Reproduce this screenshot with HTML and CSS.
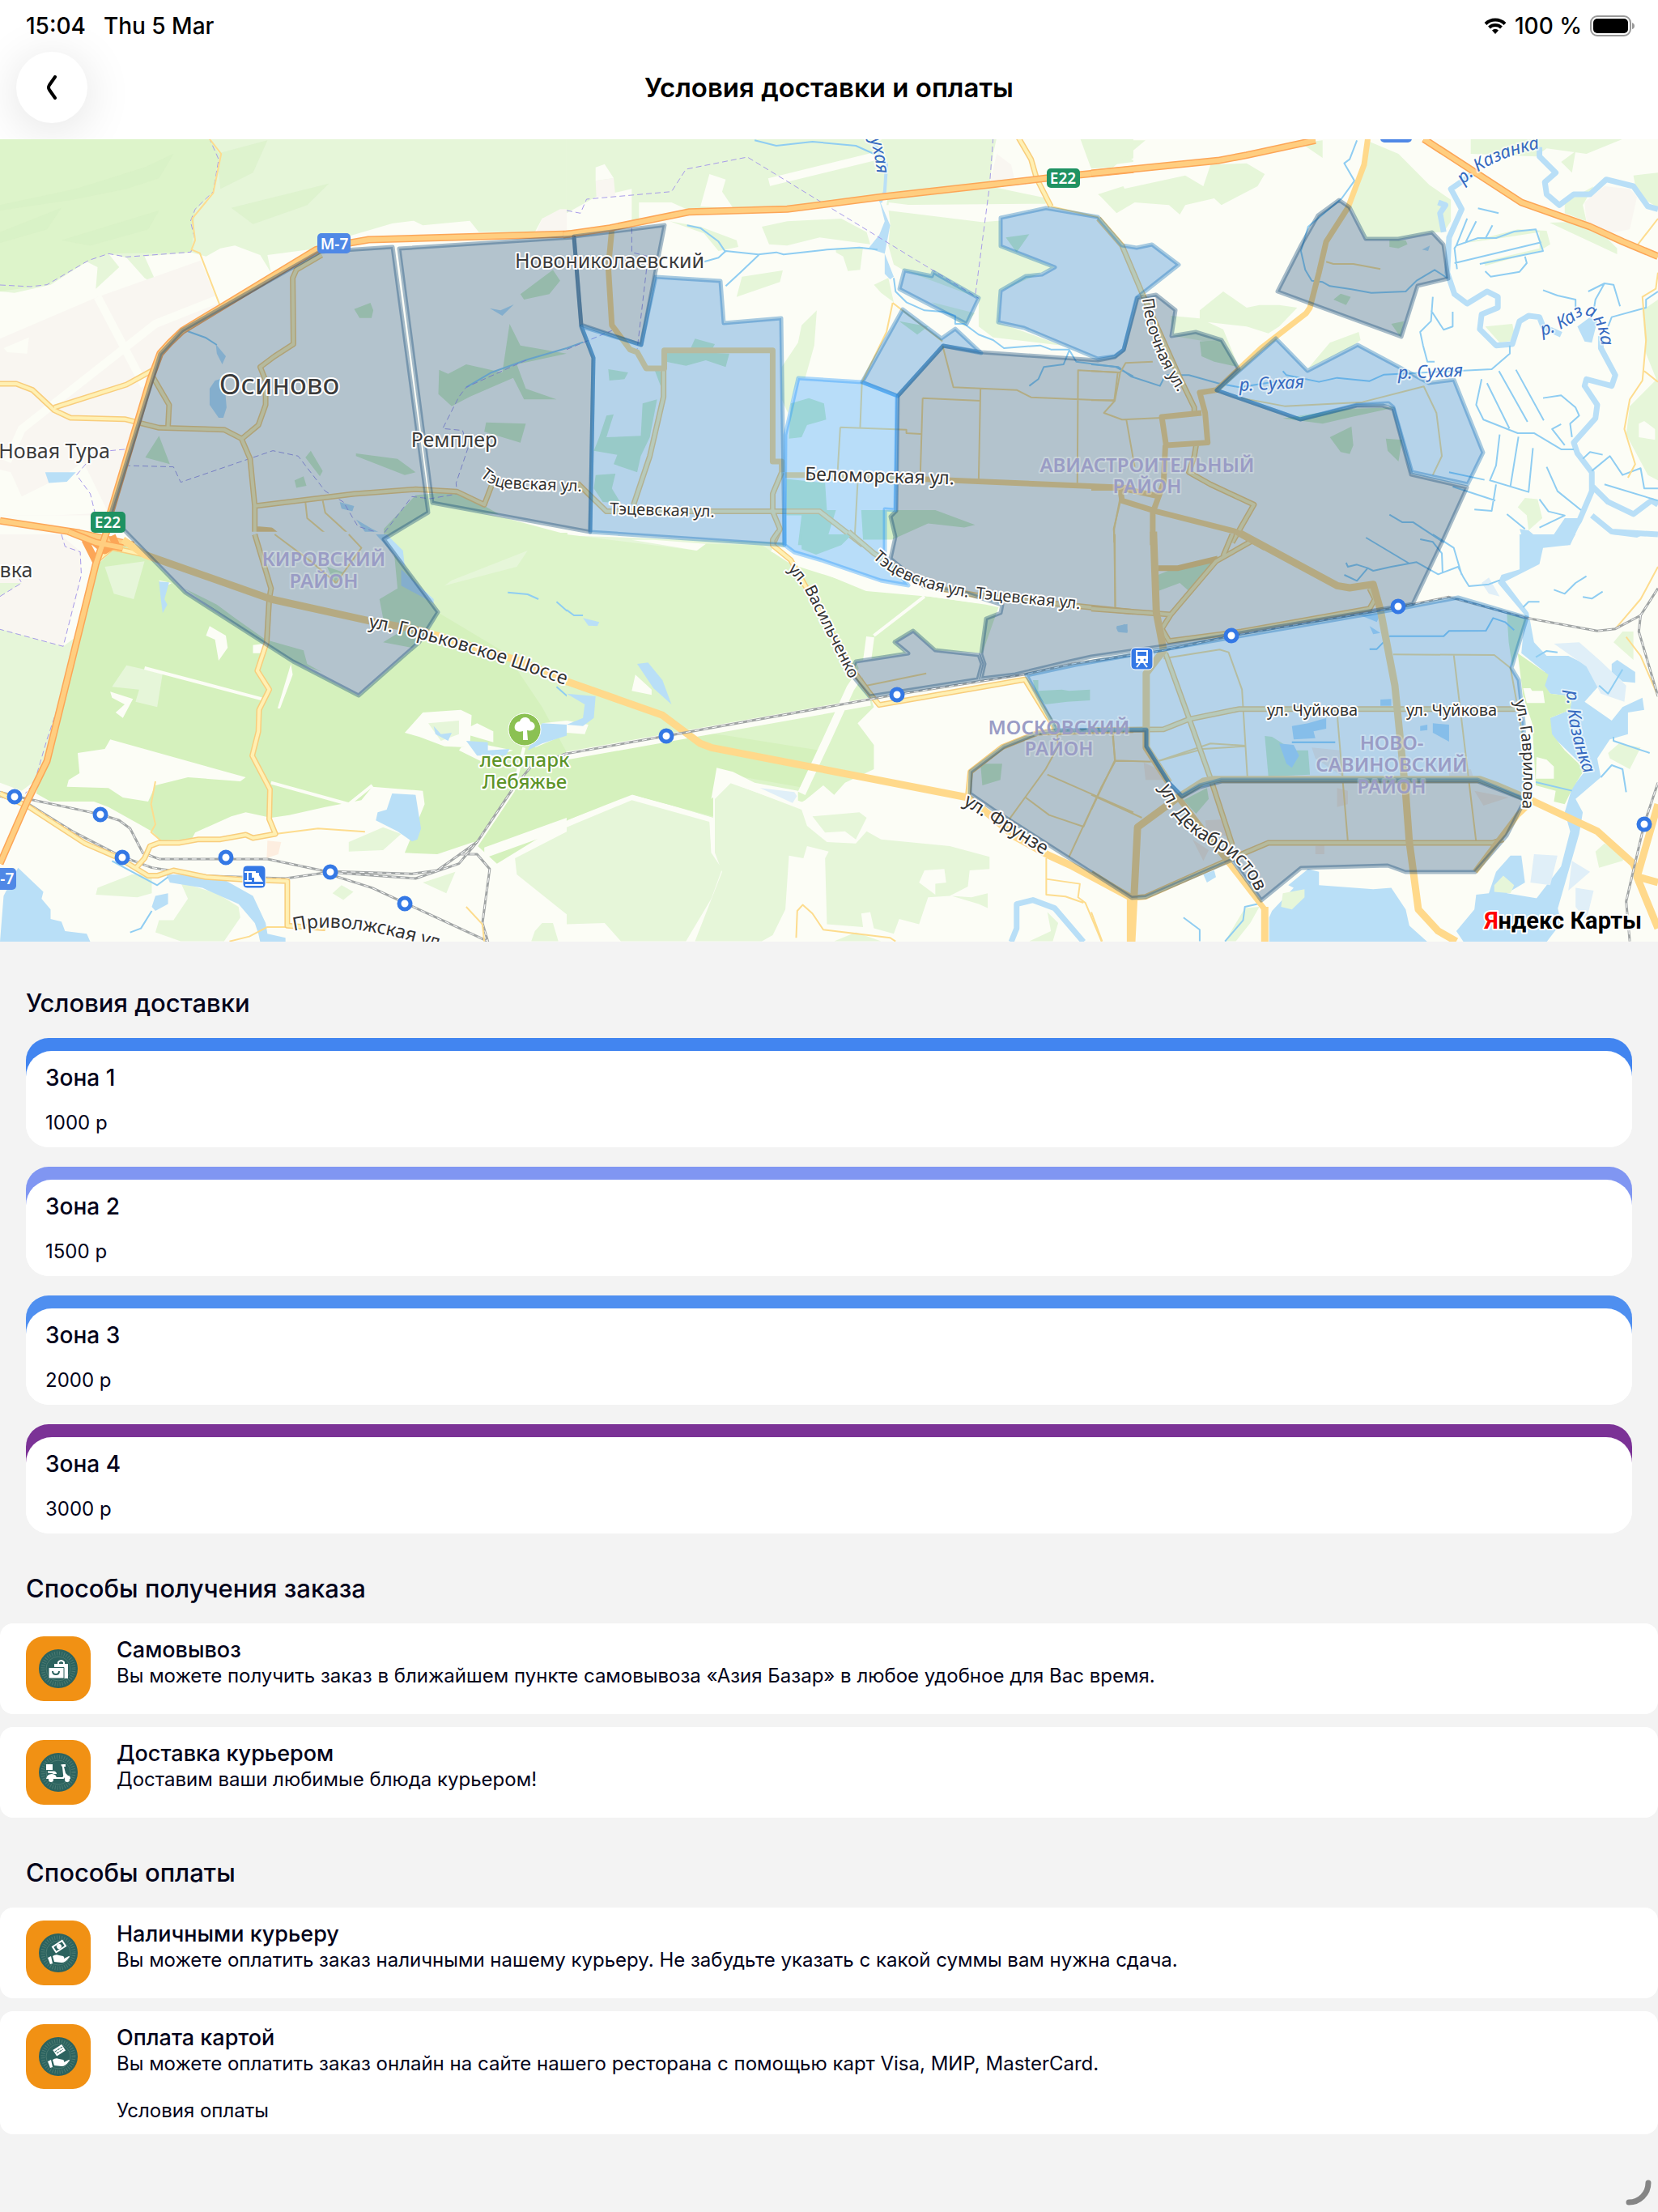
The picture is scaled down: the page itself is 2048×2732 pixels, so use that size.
FILE: index.html
```html
<!DOCTYPE html>
<html lang="ru">
<head>
<meta charset="utf-8">
<meta name="viewport" content="width=device-width, initial-scale=1">
<title>Условия доставки и оплаты</title>
<link rel="stylesheet" href="styles.css">
</head>
<body>
<header class="top">
  <div class="status">
    <span class="status-side"><span>15:04</span><span>Thu 5 Mar</span></span>
    <span class="status-side status-right">
      <svg class="wifi" viewBox="0 0 28 20" aria-hidden="true"><path d="M14 20l-4-4.600a6 6 0 0 1 8 0z"/><path class="arc" d="M2 7.500a17 17 0 0 1 24 0M6.500 12a11 11 0 0 1 15 0"/></svg>
      <span>100 %</span>
      <svg class="battery" viewBox="0 0 56 26" aria-hidden="true"><rect class="shell" x="1" y="1" width="49" height="24" rx="8"/><rect x="4" y="4" width="43" height="18" rx="5"/><path class="cap" d="M52 9q3 1 3 4t-3 4z"/></svg>
    </span>
  </div>
  <div class="navbar">
    <button class="back" type="button" aria-label="Назад"><svg viewBox="0 0 14 30" aria-hidden="true"><path d="M11 2L4 12Q2 15 4 18L11 28"/></svg></button>
    <h1>Условия доставки и оплаты</h1>
  </div>
</header>

<main>
<svg class="map" viewBox="0 0 2048 991" role="img" aria-label="Карта зон доставки">
  <defs>
    <path id="p-tets1" d="M593 416Q606 428 624 431L740 436"/>
    <path id="p-tets2" d="M753 463L900 467"/>
    <path id="p-belo" d="M994 421L1200 427"/>
    <path id="p-tets3" d="M1078 517Q1122 560 1230 570"/>
    <path id="p-tets4" d="M1205 567L1360 583"/>
    <path id="p-vas" d="M973 531L994 556L1060 688"/>
    <path id="p-gork" d="M455 603Q560 622 730 686"/>
    <path id="p-frun" d="M1189 821L1330 910"/>
    <path id="p-dek" d="M1432 800Q1450 850 1500 874T1562 966"/>
    <path id="p-gav" d="M1871 694Q1889 760 1877 860"/>
    <path id="p-priv" d="M363 978Q430 962 560 1006"/>
    <path id="p-pes" d="M1411 197Q1418 262 1464 325"/>
    <path id="p-kaz1" d="M1808 56Q1840 20 1930 6"/>
    <path id="p-kaz2" d="M1905 243Q1936 234 1950 220Q1975 206 1980 270"/>
    <path id="p-kaz3" d="M1935 681Q1936 750 1978 830"/>
    <path id="p-suh1" d="M1531 311L1650 305"/>
    <path id="p-suh2" d="M1727 296L1850 291"/>
    <path id="p-suh3" d="M1070 -12Q1082 12 1086 70"/>
  </defs>
  <rect class="land" width="2048" height="991"/>

  <g class="tile" transform="translate(0 -2) scale(.4464 .3333)">
    <path class="wood" d="M0 0H1568V270L1500 300L1480 350H1325L1300 308L1170 325L1145 308L1085 318L965 365L880 410L740 435L750 500L720 435L650 400L610 410L570 440L530 425L400 440L437 550L400 520L350 445L300 430L330 480L265 560L270 480L240 460L140 545L40 575L0 570Z"/>
    <path class="wood2" d="M0 0H580L605 60L590 200L540 270L530 425L300 430L240 460L130 545L0 570Z"/>
    <path class="shade" d="M0 250L210 190L400 110L480 60L440 150L350 190L200 230L0 270ZM0 350L170 260L130 340L0 390ZM170 380L440 270L410 340L250 400ZM600 60L740 10L700 130L610 190ZM640 260L910 170L850 250L700 320Z"/>
    <path class="town" d="M0 745L270 590L555 455L605 620L500 715L440 800L300 1400L0 1400ZM1500 300L1550 265H1568V350H1485Z"/>
    <path class="clear" d="M20 1200L60 1080L430 690L600 600M270 590L400 920"/>
    <path class="land" d="M10 780L80 740L75 800L20 795ZM0 1230L30 1240L60 1330L180 1250L230 1200L300 1390L150 1400H0Z"/>
    <path class="park" d="M980 635L1025 612L1033 640L1028 668H995ZM402 1185L440 1105L470 1210ZM1215 860L1240 875L1290 840L1390 870L1410 690L1440 770L1568 800L1430 840L1455 930L1540 970H1450L1420 890L1300 960L1250 995L1213 950ZM1345 1055L1455 1060L1440 1130L1340 1090ZM985 1170L1100 1190L1150 1240L1120 1250L985 1180ZM845 1185L860 1160L893 1235L885 1255ZM1440 580L1530 490L1550 530L1520 580L1450 600ZM815 1270L840 1255L848 1290L820 1298ZM1062 1450L1150 1325L1270 1310L1380 1395L1190 1385L1062 1488Z"/>
    <path class="wood2" d="M1070 1480L1190 1385L1200 1355L1400 1410L1568 1470V1530H1050Z"/>
    <path class="water" d="M597 765L625 810L615 840L600 800ZM595 900L620 890L627 1000L618 1038H605L580 990V930ZM125 1240L210 1240L185 1275L135 1280ZM1355 632L1390 660L1422 618L1385 640ZM940 1350L980 1365L975 1385L945 1375ZM985 1415L1030 1450L1060 1470V1510L1020 1480ZM700 1120L735 1140Z"/>
    <path class="stream" d="M500 708L570 742L600 768M1290 925L1360 870L1460 822L1568 780"/>
    <path class="border" d="M0 546L85 552L130 545L245 455L300 430L350 442L528 424L540 380L527 310L540 265L590 200L605 80L580 5M345 1215L480 1220L500 1277L755 1160L825 1180L900 1310L950 1350L990 1440L1060 1470L1140 1330L1190 1338L1265 1320L1262 1280L1295 1150L1280 1085L1225 1078L1270 960L1290 925L1460 822M345 1155L265 1165L212 1250L250 1320L270 1430"/>
    <path class="lane" d="M580 5L612 60L590 205L532 300L540 380L530 415L553 428L608 620M845 1350L850 1410L930 1500M893 1345L900 1390L990 1500"/>
    <path class="road-edge" d="M0 912H45L90 935L150 1010L195 1038L345 1043L440 1075L620 1082L668 1115L692 1190L705 1365V1500M150 1000L350 915L425 860M890 435L820 490L810 520L812 765L760 810L720 850L735 900V990L715 1065L670 1115M420 880L468 990L465 1070M705 1365L980 1320L1150 1303L1265 1312L1340 1360L1360 1290M705 1450L750 1455L790 1500"/>
    <path class="road" d="M0 912H45L90 935L150 1010L195 1038L345 1043L440 1075L620 1082L668 1115L692 1190L705 1365V1510M150 1000L350 915L425 860M890 435L820 490L810 520L812 765L760 810L720 850L735 900V990L715 1065L670 1115M420 880L468 990L465 1070M705 1365L980 1320L1150 1303L1265 1312L1340 1360L1360 1290"/>
    <path class="hwy-edge" d="M1578 357L1020 378L925 400L875 415L610 630L505 715L470 760L443 800L415 900L290 1460M0 1420L220 1465L370 1510"/>
    <path class="hwy" d="M1578 357L1020 378L925 400L875 415L610 630L505 715L470 760L443 800L415 900L290 1460M0 1420L220 1465L370 1510"/>
  </g>

  <g class="tile" transform="translate(700 -2) scale(.4464 .3333)">
    <path class="wood" d="M0 0H1190L1180 60L1170 180L1330 225L1325 245L885 250L890 210L700 240L610 265L340 275L180 320V190L80 220L0 280ZM890 260L1150 300L1200 290V400L1350 480L1200 568L1195 685L1370 770L1180 740L1140 700V595L930 490L905 470L890 400L895 320ZM1420 0H1568V90L1450 110ZM540 330L610 310L760 300L830 350L840 395L700 370L610 400L560 395ZM470 590L485 515L598 492L590 535ZM595 850L640 760L650 695L692 640L685 770L660 890H640L612 1020L595 970ZM745 410L820 405L812 490L778 494L765 440L745 425ZM850 545L890 520L905 610L870 575ZM285 310L370 330L470 380L475 405L420 420L380 355ZM1010 610L1130 650L1100 700L1040 640ZM1470 210L1540 180L1560 230L1530 270ZM0 1475L600 1500V1530H0Z"/>
    <path class="town" d="M80 160L130 150L135 220H82ZM1190 60L1220 40L1240 160L1170 170Z"/>
    <path class="land" d="M80 110L105 98L130 150L80 160ZM395 135L440 155L430 200L460 260L370 255ZM200 240L290 240L340 270L200 300ZM1190 60L1250 10H1420V80L1330 150L1240 170V110Z"/>
    <path class="clear" d="M560 165L850 70M890 255L1150 298L1220 290"/>
    <path class="park" d="M115 858L170 870L160 895L118 900ZM275 790L450 800L440 850L385 825L330 845L275 830ZM210 985L250 970L230 1110L205 1180L195 1240L130 1210L140 1175L75 1160L90 1110L110 1030L130 1025L110 1110L205 1105ZM80 1250L135 1245L125 1300L150 1355L100 1350L75 1300ZM355 745L410 765L400 790H340ZM620 985L670 965L712 985L718 1045L665 1065L650 1110L615 1115ZM608 1265L715 1280L720 1380H745L715 1510H640L650 1400L608 1400ZM815 1380H1020L1130 1435L1100 1445L1000 1430L900 1490H820ZM920 680L1000 700L970 730ZM1215 370L1280 358L1245 425ZM240 850L275 880L260 920Z"/>
    <path class="water" d="M865 230L895 325L885 395L880 430L905 515L895 525L880 505V430L835 410L865 360L880 310Z"/>
    <path class="stream wide" d="M850 20L885 100L880 200L868 240"/>
    <path class="stream" d="M905 520L910 570L940 610L990 640L1040 645L1075 660V690L1100 690L1140 730L1180 750L1210 780L1310 770L1340 785H1390L1410 830L1520 850L1568 885M1390 790L1375 840L1320 850L1305 895L1280 920M520 10L580 30L680 15L800 30L850 60M380 460L420 445L440 420L530 433L580 425L600 433L720 415L810 407L860 415M440 550L480 500L533 433M333 325L370 335L420 385L440 425M0 780L45 758"/>
    <path class="border" d="M0 270L38 280L55 228L290 200L330 117L500 72L1140 595M1180 0L1170 180L1130 590M1170 185L1568 125M180 335V425L225 440L195 785M0 785L125 715"/>
    <path class="lane" d="M1040 770L1070 925L1245 935L1285 962L1515 975L1525 870L1415 862L1413 1280M985 965L1145 975M985 965L978 1270M1145 930L1140 1265M817 906L812 1073M757 1073L940 1082V1095L980 1098M757 1073L750 1230M805 1280L797 1480M902 612L885 720L817 906M902 612L1040 755M1535 1310L1515 1450V1500M1340 255L1470 295L1535 400"/>
    <path class="road-edge" d="M268 860V960L230 1180L185 1360M30 1280L60 1320L110 1385H700L820 1510M1250 0L1285 80L1300 150L1340 255M595 1240L570 1320V1385L590 1450L570 1510"/>
    <path class="road" d="M268 860V960L230 1180L185 1360M30 1280L60 1320L110 1385H700L820 1510M1250 0L1285 80L1300 150L1340 255M595 1240L570 1320V1385L590 1450L570 1510"/>
    <path class="main" d="M125 340L115 480L125 695L175 785L195 795L220 855H270V788H570V1200H595V1240M605 1250H660L980 1265L1568 1298"/>
    <path class="hwy-edge" d="M-10 360L120 335L340 275L610 265L870 220L1170 175L1328 150L1568 118"/>
    <path class="hwy" d="M-10 360L120 335L340 275L610 265L870 220L1170 175L1328 150L1568 118"/>
  </g>

  <g class="tile" transform="translate(1348 -2) scale(.4464 .3333)">
    <path class="wood" d="M0 10H150L60 110L0 115ZM20 210L260 140L310 180L330 100L430 95L480 135L460 180L360 250L340 225L260 250L245 285L215 250L120 240L70 280ZM770 15L850 60L935 175L995 230V310L975 350L940 352L850 378H760L718 255ZM580 20L640 10V75ZM1050 0H1480L1370 60L1260 40L1230 70L1050 60ZM1500 140L1568 130V260L1510 210ZM1310 240L1390 180L1360 250L1370 310L1310 280ZM1268 315L1380 310L1455 410V432ZM1035 390L1180 340L1260 345L1270 395L1240 420L1090 475L1085 460L1240 410V350L1120 375ZM365 570L430 630L465 620L520 620L570 630L520 700L490 725L430 700L300 680V640ZM600 855L660 760L740 720L745 750L720 775ZM220 660L300 670L365 710L408 850L340 760L225 735ZM1090 700L1165 690L1175 750L1130 760ZM1525 640L1568 600V910L1535 800ZM1490 995L1568 890V1270L1540 1250L1480 1100ZM1180 1370L1200 1335L1235 1340L1248 1410L1210 1455L1205 1400ZM1300 90L1340 50L1330 130Z"/>
    <path class="land" d="M110 80L200 20L230 40L130 90ZM1515 1060L1530 1050L1560 1080V1120L1515 1110Z"/>
    <path class="town" d="M1365 240L1420 180L1490 190L1510 220L1490 340L1430 355L1370 310Z"/>
    <path class="park" d="M660 1110L720 1070L725 1140L715 1172L690 1165ZM815 1115L860 1120L850 1200L820 1160ZM670 600L690 578L718 590L705 620ZM830 690L865 680L855 738ZM300 755L360 750L408 850L340 830L305 810ZM530 1040L700 1005L840 1000L720 1035L640 1060ZM825 380L870 380L875 395L850 410L825 405Z"/>
    <path class="stream river" d="M1240 35V70L1285 130L1255 165L1260 210L1295 250L1335 210H1380L1425 155L1500 180L1540 255L1568 265M1060 130L995 190L1025 265L990 370L985 500L1005 580L1040 615L1095 570L1125 590V630L1080 655L1075 710L1120 770L1165 765L1185 680L1210 660L1240 665L1250 700L1300 730M1410 735V780L1450 880L1440 920L1370 895L1365 920L1400 990L1395 1040L1335 1130L1345 1170L1385 1240V1310L1350 1420L1310 1500M1385 1290L1430 1350L1500 1395L1550 1345L1568 1360M1385 1400L1440 1460L1568 1470M960 240L980 250L965 280L975 350"/>
    <path class="water" d="M1345 700L1380 665L1400 680L1385 760L1365 755ZM915 415L937 400L932 420ZM1310 1410H1360L1325 1510H1260ZM1185 1450L1210 1455L1240 1490L1200 1510Z"/>
    <path class="stream" d="M735 10L715 80L700 95L728 160L693 225L600 330L580 420L592 490L610 530L640 535L660 550L720 562L775 575L870 570L900 530L950 490L985 520M1040 300L1010 400M1065 310L1035 390M1110 325L1090 375M1010 400L1070 372H1120L1170 348L1230 340L1250 420L1075 468M1005 465L1245 388M1010 400L1005 410L1012 487M1200 440L1205 465L1185 497L1105 515L1090 495M1070 262L1127 280M945 590L940 680L910 720L918 770L930 830L950 830M1000 645V700L975 712L940 640M1250 565L1290 585L1340 600V640M1375 570L1420 540L1445 545L1463 625M1420 540L1395 600L1390 640M1568 570L1535 600V630L1440 665L1430 700M1080 895L1065 990L1085 1045L1180 1095H1225L1300 1155H1335M1095 910L1157 1078M1128 865L1207 1053M1175 860L1252 1048M1130 1100L1120 1215L1103 1270L1210 1313L1222 1150M1182 1108L1160 1290M1120 1285L1108 1383L1060 1378M990 1240L1088 1268M1000 1293L1118 1345M530 865L540 880L630 905L680 890L770 902L810 878L1108 858L1158 800V770M0 840L75 850L110 885L190 920L205 880L270 880L350 910L410 925L530 900M1250 965L1300 955L1340 1000L1350 1030L1325 1060L1330 1110M1310 1140L1275 1080L1300 1062M1385 1235L1435 1180L1470 1250L1520 1225L1530 1300H1568M1360 1190L1380 1165L1415 1175M1420 1285L1568 1345M1260 1220L1290 1310L1355 1380M1240 1340L1265 1385L1310 1400L1240 1445M1150 1395L1200 1450M825 1397L860 1425H890L975 1500"/>
    <path class="lane" d="M415 965L535 995L750 980L920 922L955 1020L970 1180L945 1250M650 460L670 468H725L800 487M97 1045L120 1220M0 865L80 870L95 835L170 830M80 870L65 975L35 1020L85 1045L195 1038M0 973H65M65 1500L62 1450L80 1350M1568 300L1510 400M1568 500L1562 560L1525 590L1535 750L1525 900L1490 970L1475 1080L1505 1210L1485 1260M1530 865L1568 905"/>
    <path class="road-edge" d="M20 300L85 400L145 590L245 890L285 1000V1020M290 1140L285 1180L270 1240L330 1285L450 1360L390 1500"/>
    <path class="road" d="M20 300L85 400L145 590L245 890L285 1000V1020M290 1140L285 1180L270 1240L330 1285L450 1360L390 1500"/>
    <path class="main" d="M765 5L755 100L710 260L650 385L630 500L605 630L595 650L470 780L347 935L300 945L315 1020L322 1130L207 1140L195 1035L305 1020M205 1140L200 1280L170 1390V1510M80 1300L85 1345L180 1385L400 1460L480 1520M0 1298H80L190 1330"/>
    <path class="hwy-edge" d="M0 132L350 85L430 65L620 10M920 5L1190 240L1380 330L1470 385L1568 440"/>
    <path class="hwy" d="M0 132L350 85L430 65L620 10M920 5L1190 240L1380 330L1470 385L1568 440"/>
  </g>

  <g class="tile" transform="translate(0 488) scale(.4464 .3333)">
    <path class="town" d="M0 0H165L225 65L220 200L175 415L0 350Z"/>
    <path class="wood" d="M0 350L175 415L210 380L150 700L110 900L60 950L0 920ZM270 1310L365 1260L420 1260V1330L380 1345L265 1335ZM500 1290L600 1330L660 1380L665 1420L620 1508H500L430 1475L440 1430L480 1430L520 1350ZM920 1330L945 1300L978 1325L950 1355ZM965 1140L1060 1085L1110 1110L1060 1170L965 1175ZM1170 1290L1260 1250L1235 1330ZM1480 1470L1500 1440H1530L1545 1508H1470ZM1425 1200L1570 1100V1410L1430 1260ZM0 180L60 180L0 230Z"/>
    <path class="wood3" d="M440 70L330 40L270 110L100 960L140 990L260 990L300 1010L420 1100L445 1135L530 1130L540 1105L640 1045L680 1030L750 1050L800 1040L900 1010L1000 985L1030 935L1170 950L1175 1000L1120 1180L1210 1185L1310 1140L1375 1220L1570 1060V0H400Z"/>
    <path class="wood2" d="M1062 -6H1570V812L1500 640L1400 440L1213 290L1062 18Z"/>
    <path class="wood" d="M290 120L400 100L370 240L315 220ZM1250 170L1460 60L1430 120L1230 190Z"/>
    <path class="land" d="M345 -10L512 215L810 470L993 598L1160 400L1213 287L1062 18V-10Z"/>
    <path class="land" d="M215 810L290 795L305 760L680 900L665 915L520 900L430 930L410 990L340 975L300 940L185 935L190 910L220 885ZM580 340L625 375L630 420L605 468L595 390L570 375ZM305 583L368 610L340 680L320 660L345 630L310 605ZM1120 735L1170 660L1275 650L1305 670L1300 790L1230 785L1160 750ZM1290 720L1320 700L1365 730V770L1300 745ZM1270 800L1290 765L1420 800L1330 840ZM700 410L730 405V440H700ZM805 480L810 520L775 645H768ZM440 170L475 180L450 200ZM1060 20L1110 70L1120 150L1080 60ZM1500 700L1568 690V740L1480 790ZM1340 1160L1568 1050V1090L1340 1200Z"/>
    <path class="wood" d="M1185 700L1270 690V740L1220 765ZM350 485L450 515L435 640L375 620L385 575L310 565Z"/>
    <path class="clear thin" d="M400 495L725 610M750 920L965 1000L1030 930M1310 1170L1420 950L1450 790"/>
    <path class="park" d="M510 200L600 260L650 310L735 390L840 430L850 480L890 510L810 470L690 370ZM1050 240L1100 200L1090 60L1213 287L1195 340L1140 420L1060 400L1120 350L1060 310ZM905 120L950 140L925 180Z"/>
    <path class="peach" d="M740 1135L778 1140L770 1185L738 1200Z"/>
    <path class="water" d="M1085 960L1150 965L1165 1090L1155 1130L1140 1138L1100 1100L1040 1060L1045 1030L1070 1020ZM440 175L468 178L455 240L463 260L450 292L445 240ZM1500 700L1570 705V745L1500 775L1460 800ZM1290 765L1350 770V800L1410 795L1400 820H1320ZM1200 710L1220 740L1250 735L1240 765L1205 740ZM50 1235L120 1325L115 1350L140 1390V1425L170 1435L180 1470L240 1480L250 1510H0L10 1340ZM460 1260L540 1262L620 1280L700 1340L735 1440L740 1480L790 1495V1510H720L715 1480L705 1440L660 1370L560 1310L470 1290ZM430 1340L465 1330V1370L430 1395L420 1380ZM1110 130L1200 240V255L1110 190ZM1040 0H1070L1115 60L1120 120Z"/>
    <path class="stream" d="M310 1210L435 1300L465 1270M1405 215L1460 222L1490 240M1540 250L1570 285M1540 565L1570 600M420 1395L390 1460L360 1475"/>
    <path class="border" d="M170 0L180 45L222 65L225 150L175 415L0 352M250 200L160 640L130 760L95 920L70 960M0 230L60 180L35 120"/>
    <path class="rail" d="M0 955L40 970L277 1037L330 1060L360 1090L395 1180L440 1203H740L900 1248L1140 1258L1210 1245L1320 1140L1420 940L1470 860L1568 812M0 970L80 1000L200 1100L330 1190L420 1235L570 1265L790 1275L910 1252L1150 1275L1270 1220L1320 1140M913 1260L1030 1310L1350 1508L1335 1440L1355 1240L1320 1185H1270"/>
    <path class="rail-gap" d="M0 955L40 970L277 1037L330 1060L360 1090L395 1180L440 1203H740L900 1248L1140 1258L1210 1245L1320 1140L1420 940L1470 860L1568 812M0 970L80 1000L200 1100L330 1190L420 1235L570 1265L790 1275L910 1252L1150 1275L1270 1220L1320 1140M913 1260L1030 1310L1350 1508L1335 1440L1355 1240L1320 1185H1270"/>
    <path class="lane" d="M430 915L418 1000L430 1075L418 1103L445 1135M762 1110L880 1090L1010 1102M1290 1380L1335 1445L1340 1508M760 0L860 100L930 180M965 0L1000 50L930 180M795 1455L740 1455L690 1490L635 1508"/>
    <path class="road-edge" d="M705 0L750 200L745 240L738 400L712 505L745 575L717 650L715 730L698 820L747 945L745 1055L762 1110L700 1125L680 1113L610 1130H550L495 1143H440L415 1155L400 1200L375 1238M0 960L80 1010L235 1145L330 1200L410 1265H435L480 1245L570 1270L680 1280L795 1285V1450L900 1460M265 100L310 50L400 75"/>
    <path class="road" d="M705 0L750 200L745 240L738 400L712 505L745 575L717 650L715 730L698 820L747 945L745 1055L762 1110L700 1125L680 1113L610 1130H550L495 1143H440L415 1155L400 1200L375 1238M0 960L80 1010L235 1145L330 1200L410 1265H435L480 1245L570 1270L680 1280L795 1285V1450L900 1460M265 100L310 50L400 75"/>
    <path class="main wide" d="M340 20L400 75L750 240L1020 320L1160 355L1440 470L1578 550"/>
    <path class="hwy-edge" d="M300 -30L265 110L130 840L75 990L0 1220M190 -10L265 30L340 50M235 20L265 100M310 5L320 35L290 60L262 30"/>
    <path class="hwy" d="M300 -30L265 110L130 840L75 990L0 1220M190 -10L265 30L340 50"/>
  </g>

  <g class="tile" transform="translate(700 488) scale(.4464 .3333)">
    <path class="wood2" d="M0 0L360 60L385 35L540 40L620 110L820 195L1160 260L1195 270L1150 440L1020 430L958 358L908 400L940 440L800 470L840 600L850 640L805 700L850 780V870L770 920L740 965L710 930L660 985L640 1000L450 890L405 960V1050L180 960L0 1060Z"/>
    <path class="wood3" d="M0 812L340 730L440 745L700 800L660 940L450 890L405 960V1045L180 965L0 1060Z"/>
    <path class="wood" d="M0 1085L180 985L395 1065L400 1180L430 1240L400 1350L330 1508H150L105 1440L0 1445ZM410 980L455 920L650 1020L665 1080L720 1140L800 1145L830 1100L870 1130L1060 1155L1170 1195V1240L1115 1245L1110 1305L1060 1340L1000 1345L975 1445L920 1425L905 1480L850 1460L840 1400L815 1405L820 1455L720 1445L715 1200L725 1175L665 1155L655 1200L615 1190L605 1390L570 1485L540 1508H355L430 1250L410 1180ZM680 1045L810 1030L830 1050L800 1130L770 1100L715 1105ZM1065 1340L1120 1345L1165 1330V1385L1140 1370ZM740 1508L800 1475L870 1508ZM1330 1400L1360 1440L1345 1508H1280L1340 1470Z"/>
    <path class="land" d="M975 1290L990 1245L1045 1240L1050 1290L1020 1295V1335ZM190 520L235 575V595L180 580ZM0 690L60 705L50 740L0 735ZM415 865L460 880L520 920L640 950V1010L450 920L400 980ZM240 20L385 35L360 60L180 20Z"/>
    <path class="clear" d="M570 50L830 195L1000 215L1140 240M840 380L830 480L785 570L720 760L650 960M0 820L275 755L840 620"/>
    <path class="clear thin" d="M990 230L850 375M180 970L400 1055L405 1180M455 910L700 1020"/>
    <path class="park" d="M1290 540H1305V580L1370 575L1390 580L1448 575V615L1385 620L1325 630L1300 600ZM1145 850L1205 850L1200 910L1150 930ZM650 0H790L760 40L690 75L650 55Z"/>
    <path class="water" d="M195 480L225 475L265 540L290 630L240 570ZM0 590L80 600L75 680L45 710L0 705L45 680L50 630ZM45 310L90 325L85 340L60 338ZM1520 345L1545 332L1553 360H1525Z"/>
    <path class="marsh" d="M535 940L630 955L637 970L625 995Z"/>
    <path class="stream" d="M0 280L20 300H45"/>
    <path class="stream river" d="M1230 1510L1245 1460V1370L1290 1355L1350 1385L1430 1510"/>
    <path class="lane" d="M635 1495L638 1395L653 1373L680 1405L710 1465L895 1495L910 1508M1327 1200V1335L1380 1342L1430 1365M1327 1277L1420 1295L1415 1345L1435 1365L1480 1508M825 562L995 515M1515 0L1518 270M1510 735L1518 840L1480 935L1390 1195M1358 740V790L1325 870L1225 1055M1330 890L1568 1030M1270 975L1335 1040L1430 1083L1480 935M1518 840H1568"/>
    <path class="road-edge" d="M585 -10L570 20V40L620 95L790 500L845 600L865 632L1268 538L1355 727L1300 737L1205 788L1117 880L1110 970M1300 735L1568 725M780 -10L850 70L990 190L1130 225L1430 268L1568 287"/>
    <path class="road" d="M585 -10L570 20V40L620 95L790 500L845 600L865 632L1268 538L1355 727L1300 737L1205 788L1117 880L1110 970M1300 735L1568 725M780 -10L850 70L990 190L1130 225L1430 268L1568 287"/>
    <path class="main wide" d="M-10 540L265 670L370 775L400 790L1110 975L1180 1050L1240 1120L1335 1190L1400 1230L1560 1345V1510"/>
    <path class="rail" d="M-10 815L275 747L915 593L1270 518L1400 480L1568 445"/>
    <path class="rail-gap" d="M-10 815L275 747L915 593L1270 518L1400 480L1568 445"/>
  </g>

  <g class="tile" transform="translate(1348 488) scale(.4464 .3333)">
    <path class="water" d="M500 1395L560 1310L545 1300L600 1240L630 1250V1300L780 1315L830 1310L870 1390L880 1450L930 1510H492V1420ZM1030 1510L1010 1470L1060 1390L1065 1335L1100 1330L1120 1250L1160 1190L1190 1190L1200 1290L1150 1330L1240 1350L1290 1380L1300 1440L1260 1510ZM1185 0H1340L1320 40L1250 50L1240 110L1145 175L1210 290L1225 400L1260 450L1320 450L1380 490L1405 560L1365 620L1440 690L1470 640L1525 605L1530 650L1485 660V740L1435 760L1400 830L1410 900L1340 980L1360 1030L1350 1110L1290 1390L1220 1370L1300 1230L1325 1100L1310 1030L1330 940L1370 870L1270 740V680L1325 650L1330 600L1270 590L1245 550L1255 510L1190 440L1200 300L1125 180L1135 150L1185 130ZM310 1260L340 1245L345 1270L320 1290ZM1440 480L1455 465L1505 510V550L1470 545L1440 510ZM1440 0H1530L1510 12Z"/>
    <path class="marsh" d="M1280 405L1350 400L1410 470L1480 560L1475 620L1410 590L1370 490ZM1225 1185L1290 1190L1270 1300L1215 1290ZM1330 1210L1380 1250L1320 1320ZM1080 180L1100 160L1130 230L1100 220ZM1340 1310L1390 1320L1370 1430L1340 1380Z"/>
    <path class="wood3" d="M1180 440L1265 520L1255 560L1270 590L1330 600L1325 650L1270 680L1275 740L1310 800L1365 870L1330 945L1310 1000L1280 990L1285 950L1230 930L1220 700L1195 600Z"/>
    <path class="land" d="M1195 570L1215 570L1220 580H1250L1255 625L1205 625ZM1232 825L1260 835L1280 860V905H1230Z"/>
    <path class="wood" d="M1445 400L1470 360L1500 360V465ZM1430 810L1460 775L1520 790L1490 870L1435 830ZM1395 1175L1420 1145L1480 1190L1470 1210L1405 1235ZM1115 1300L1140 1265L1170 1300L1160 1330L1115 1325ZM530 1330L590 1315V1345L555 1390L525 1380ZM425 1385L465 1380L440 1440L400 1508H370Z"/>
    <path class="park" d="M185 150L240 120L345 95L270 210L245 180L185 210ZM480 747L500 750L560 800L600 800L605 890L490 897ZM255 985L320 940L325 980L290 1035ZM1150 295L1205 310L1165 490L1155 400Z"/>
    <path class="peach" d="M145 845L185 870L215 910H150ZM610 790L690 800L700 900L620 830ZM1060 950L1155 975L1085 1005ZM315 1060L375 1055L380 1120L320 1105ZM680 940L710 950V1000L680 1010ZM620 1155L645 1150V1185H620ZM280 1130L325 1170L310 1210ZM990 880L1050 870L1060 910H990Z"/>
    <path class="water" d="M70 340L100 332V365L75 362ZM555 710L600 700L650 680V720L615 730L620 755L560 760ZM520 775L560 780L575 820L555 865L540 850ZM910 710L930 705V725L910 728ZM945 700L990 705V768L945 735ZM800 612L830 610V635H800ZM745 300L800 295L790 325ZM770 340L800 365L780 370Z"/>
    <path class="stream" d="M760 12L880 108M705 105L710 120L735 112L765 125L780 135L830 120L900 103L960 148L1015 120L1030 160L1045 192L1100 185L1130 170M910 18L945 28L970 70L972 140M700 150L735 172L765 125M945 0L1003 50L1025 150M825 377H975L990 358L1092 357L1112 310L1145 325L1170 355M770 425H790L825 377M555 770H675M255 1420L300 1465V1508M370 1508L420 1430L425 1380L465 1368M1230 918L1330 950M1445 750V765L1545 810M1410 900L1440 855L1470 870L1480 955M1230 455L1260 432L1290 437M1195 270L1210 250H1240M1280 205L1310 220L1340 180L1370 155M1360 232L1385 238L1415 212M1405 560L1430 590L1470 500"/>
    <path class="lane" d="M65 0L66 270M200 460L355 427L380 437L417 575L420 640L432 900M835 445L1115 447L1160 495L1185 680L1220 980M1003 447L1065 1140M680 660L710 1140M185 840L330 775L425 783M185 840L310 795L425 785M60 735L65 838L165 842M65 838L0 1020M0 965L140 1050M1450 350L1520 240L1568 120M1480 380L1520 450L1568 600M0 1400L30 1508"/>
    <path class="road-edge" d="M0 725L200 722L270 685L410 647H1175M205 440L270 680L330 905L390 1150M0 275L220 297M450 20L345 100L220 297L195 350L215 395L415 360L770 275L785 240L770 200M390 0L365 80M112 1348L150 1343L390 1200L490 1143H1110L1140 1130M185 125H240L350 90"/>
    <path class="road" d="M0 725L200 722L270 685L410 647H1175M205 440L270 680L330 905L390 1150M0 275L220 297M450 20L345 100L220 297L195 350L215 395L415 360L770 275L785 240L770 200M390 0L365 80M112 1348L150 1343L390 1200L490 1143H1110L1140 1130"/>
    <path class="main" d="M1220 990L1180 1040L1062 1250M0 1255L112 1348M240 975L480 1390"/>
    <path class="main wide" d="M172 -10L180 290L200 430L152 515V790L215 920M410 -5L680 190L715 198L780 185L800 280L840 560L870 960L880 1140L905 1390L960 1470L1010 1508M112 1510L128 1085L240 975L310 915L340 908H1075L1120 930L1225 990L1400 1100L1500 1220L1515 1270L1568 1290M1568 1000L1510 1270L1568 1460M480 1380V1510"/>
    <path class="rail" d="M0 470L200 430L388 376L850 270L990 232L1205 310L1400 358L1450 350L1520 300L1568 200M1520 300L1515 360L1568 600M1568 920L1530 1073L1480 1360L1490 1508"/>
    <path class="rail-gap" d="M0 470L200 430L388 376L850 270L990 232L1205 310L1400 358L1450 350L1520 300L1568 200M1520 300L1515 360L1568 600M1568 920L1530 1073L1480 1360L1490 1508"/>
  </g>

  <g class="zone navy">
    <path d="M395 139L485 133L529 461L474 494L541 584L518 621L443 687L362 645L229 560L136 465L198 265L225 236Z"/>
    <path d="M493 135L709 121L718 231L733 270L729 485L534 449Z"/>
    <path d="M709 120L821 106L792 254L718 229Z"/>
    <path d="M1165 255L1212 263L1356 273L1377 269L1388 260L1405 196L1428 192L1452 211L1447 243L1477 238L1509 248L1530 284L1503 310L1606 346L1676 329H1708L1721 333L1743 414L1812 430L1781 498L1745 574L1437 626L1348 639L1321 645L1254 661L1212 666L1216 648L1212 636L1218 592L1236 585L1238 575L1191 560L1142 553L1100 518L1106 491L1100 466L1107 459L1109 317Z"/>
    <path d="M1057 645L1122 635L1105 621L1128 607L1155 631L1209 637L1213 648L1208 667L1074 688L1050 659Z"/>
    <path d="M1654 75L1667 84L1687 123H1727L1769 115L1783 130L1789 172L1751 181L1731 244L1578 188L1607 131L1628 94Z"/>
    <path d="M1416 730H1305L1280 734L1240 750L1199 781L1198 808L1227 828L1321 888L1398 937L1415 936L1522 890L1558 940L1607 900L1714 897L1736 905H1822L1861 860L1879 825L1884 816L1825 793H1509L1482 800L1460 812L1444 795L1416 750Z"/>
  </g>
  <g class="zone azure">
    <path d="M810 170L890 175L894 227L965 221L969 501L729 485L733 270L718 231L792 254Z"/>
    <path d="M1115 210L1163 246L1180 234L1212 264L1165 255L1109 317L1065 300Z"/>
    <path d="M1117 162L1151 169L1153 164L1209 196L1194 228L1111 185Z"/>
    <path d="M1236 97L1292 85L1356 96L1386 131L1404 134L1423 130L1456 155L1404 196L1388 260L1377 268L1356 271L1265 233L1233 226L1236 187L1267 169L1287 167L1303 158L1236 132Z"/>
    <path d="M1576 246L1615 286L1677 254L1765 301L1796 297L1832 387L1813 426L1744 411L1721 331L1715 326L1676 328L1606 346L1503 310Z"/>
    <path d="M1268 662L1329 649L1437 630L1727 580L1801 566L1886 591L1867 653L1876 668L1882 721L1884 815L1825 791H1509L1482 798L1460 811L1444 795L1416 750V729L1305 730Z"/>
  </g>
  <g class="zone sky">
    <path d="M986 295L1065 300L1108 317L1106 458L1093 457V514L1122 551L1088 545L1015 520L981 510L969 501L970 365Z"/>
  </g>

  <g class="stops">
    <circle cx="18" cy="812" r="7"/><circle cx="124" cy="834" r="7"/><circle cx="151" cy="887" r="7"/><circle cx="279" cy="887" r="7"/><circle cx="408" cy="905" r="7"/><circle cx="500" cy="944" r="7"/><circle cx="823" cy="737" r="7"/><circle cx="1108" cy="686" r="7"/><circle cx="1521" cy="613" r="7"/><circle cx="1727" cy="577" r="7"/><circle cx="2031" cy="846" r="7"/>
  </g>
  <g class="pin">
    <rect x="1397" y="628" width="27" height="27" rx="5"/>
    <path d="M1404 632h13v14h-13zM1404 652l4-5m9 5l-4-5" class="pin-line"/><path class="pin-fill" d="M1403 638h15v9h-15z"/><circle cx="1407" cy="643" r="1.500"/><circle cx="1414" cy="643" r="1.500"/>
    <rect x="300" y="897" width="28" height="28" rx="5"/>
    <path class="pin-fill" d="M302 904h14v2h4v3l5 8h-11v-5h-3v5h-9v-2h3v-9h-3zM307 906v9h4v-9zM303 920h22v2h-22z" fill-rule="evenodd"/>
  </g>
  <g class="tree-pin">
    <circle cx="648" cy="729" r="20"/>
    <path d="M646 742v-11c-14 4-12-12-4-12 2-7 12-6 13 0 9 2 7 14-4 11l1 12z"/>
  </g>

  <g class="shields">
    <rect class="euro" x="112" y="460" width="43" height="26" rx="5"/><text x="133" y="480">E22</text>
    <rect class="euro" x="1293" y="36" width="41" height="24" rx="5"/><text x="1313" y="55">E22</text>
    <rect x="392" y="116" width="41" height="25" rx="5"/><text x="413" y="136">М-7</text>
    <rect x="-20" y="900" width="40" height="27" rx="5"/><text x="0" y="920">М-7</text>
    <rect x="1705" y="-20" width="39" height="24" rx="5"/>
  </g>

  <g class="labels">
    <g class="place">
      <text class="city" x="345" y="315">Осиново</text>
      <text x="67" y="394">Новая Тура</text>
      <text x="753" y="159">Новониколаевский</text>
      <text x="561" y="380">Ремплер</text>
      <text x="20" y="541">вка</text>
    </g>
    <g class="district">
      <text x="1417" y="411">АВИАСТРОИТЕЛЬНЫЙ</text><text x="1417" y="437">РАЙОН</text>
      <text x="400" y="527">КИРОВСКИЙ</text><text x="400" y="554">РАЙОН</text>
      <text x="1308" y="735">МОСКОВСКИЙ</text><text x="1308" y="761">РАЙОН</text>
      <text x="1719" y="754">НОВО-</text><text x="1719" y="781">САВИНОВСКИЙ</text><text x="1719" y="808">РАЙОН</text>
    </g>
    <g class="forest"><text x="648" y="775">лесопарк</text><text x="648" y="802">Лебяжье</text></g>
    <g class="street">
      <text><textPath href="#p-tets1">Тэцевская ул.</textPath></text>
      <text><textPath href="#p-tets2">Тэцевская ул.</textPath></text>
      <text><textPath href="#p-tets3">Тэцевская ул.</textPath></text>
      <text><textPath href="#p-tets4">Тэцевская ул.</textPath></text>
      <text><textPath href="#p-vas">ул. Васильченко</textPath></text>
      <text><textPath href="#p-gav">ул. Гаврилова</textPath></text>
      <text><textPath href="#p-pes">Песочная ул.</textPath></text>
      <text x="1565" y="712">ул. Чуйкова</text>
      <text x="1737" y="712">ул. Чуйкова</text>
    </g>
    <g class="street avenue">
      <text><textPath href="#p-belo">Беломорская ул.</textPath></text>
      <text><textPath href="#p-gork">ул. Горьковское Шоссе</textPath></text>
      <text><textPath href="#p-frun">ул. Фрунзе</textPath></text>
      <text><textPath href="#p-dek">ул. Декабристов</textPath></text>
      <text><textPath href="#p-priv">Приволжская ул.</textPath></text>
    </g>
    <g class="hydro">
      <text><textPath href="#p-kaz1">р. Казанка</textPath></text>
      <text><textPath href="#p-kaz2">р. Казанка</textPath></text>
      <text><textPath href="#p-kaz3">р. Казанка</textPath></text>
      <text><textPath href="#p-suh1">р. Сухая</textPath></text>
      <text><textPath href="#p-suh2">р. Сухая</textPath></text>
      <text><textPath href="#p-suh3">Сухая</textPath></text>
    </g>
    <text class="brand" x="2028" y="975"><tspan>Я</tspan>ндекс Карты</text>
  </g>
</svg>

<section class="block first">
  <h2>Условия доставки</h2>
  <ul class="zones">
    <li class="zone-card z1"><div><h3>Зона 1</h3><p>1000 р</p></div></li>
    <li class="zone-card z2"><div><h3>Зона 2</h3><p>1500 р</p></div></li>
    <li class="zone-card z3"><div><h3>Зона 3</h3><p>2000 р</p></div></li>
    <li class="zone-card z4"><div><h3>Зона 4</h3><p>3000 р</p></div></li>
  </ul>
</section>

<section class="block">
  <h2>Способы получения заказа</h2>
  <ul class="methods">
    <li class="method">
      <svg class="badge" viewBox="0 0 80 80" aria-hidden="true"><circle class="disc" cx="40" cy="40" r="24"/><circle class="weave" cx="40" cy="40" r="19"/><circle class="weave rim" cx="40" cy="40" r="15"/><path class="ink" d="M35 34h17v18H35z"/><path class="line" d="M40 35v-3a4 4 0 0 1 7 0v3"/><path class="ink cut" d="M28 38.500h19v13.500H28z"/><path class="teal" d="M33 43q0 4 4 4t4-4"/></svg>
      <div><h3>Самовывоз</h3><p>Вы можете получить заказ в ближайшем пункте самовывоза «Азия Базар» в любое удобное для Вас время.</p></div>
    </li>
    <li class="method">
      <svg class="badge" viewBox="0 0 80 80" aria-hidden="true"><circle class="disc" cx="40" cy="40" r="24"/><circle class="weave" cx="40" cy="40" r="19"/><circle class="weave rim" cx="40" cy="40" r="15"/><path class="ink" d="M25 30h8v7h-8zM27 38.500h8q3 1 3 3.500h-4q-2-1.500-7-1.500zM25 48q1-6 7-6 6 0 6 6zM43 30.500l3-.5h3v3h-2l2 8 3 3q3 0 3 4h-7l-2-5-1-9.500z"/><path class="line" d="M37 47h9l2-4"/><circle class="ink" cx="31" cy="49" r="3"/><circle class="ink" cx="51" cy="49" r="3"/></svg>
      <div><h3>Доставка курьером</h3><p>Доставим ваши любимые блюда курьером!</p></div>
    </li>
  </ul>
</section>

<section class="block">
  <h2>Способы оплаты</h2>
  <ul class="methods">
    <li class="method">
      <svg class="badge" viewBox="0 0 80 80" aria-hidden="true"><circle class="disc" cx="40" cy="40" r="24"/><circle class="weave" cx="40" cy="40" r="19"/><circle class="weave rim" cx="40" cy="40" r="15"/><g transform="rotate(-33 41 32)"><path class="line" d="M34 28h14v8H34z"/><circle class="ink" cx="41" cy="32" r="3"/></g><path class="ink" d="M27 46l4-2 2 9-3 1zM33 44q4-3 8-1l5 1q2 1 1 3l6-3q2 0 0 2-4 6-9 6l-9-1z"/></svg>
      <div><h3>Наличными курьеру</h3><p>Вы можете оплатить заказ наличными нашему курьеру. Не забудьте указать с какой суммы вам нужна сдача.</p></div>
    </li>
    <li class="method">
      <svg class="badge" viewBox="0 0 80 80" aria-hidden="true"><circle class="disc" cx="40" cy="40" r="24"/><circle class="weave" cx="40" cy="40" r="19"/><circle class="weave rim" cx="40" cy="40" r="15"/><g transform="rotate(-33 41 33)"><path class="ink" d="M35 28h13v9H35z"/><path class="teal dots" d="M36 31h11M37 34h9"/></g><path class="ink" d="M27 46l4-2 2 9-3 1zM33 44q4-3 8-1l5 1q2 1 1 3l6-3q2 0 0 2-4 6-9 6l-9-1z"/></svg>
      <div><h3>Оплата картой</h3><p>Вы можете оплатить заказ онлайн на сайте нашего ресторана с помощью карт Visa, МИР, MasterCard.</p><a href="#terms">Условия оплаты</a></div>
    </li>
  </ul>
</section>
</main>
<svg class="corner" viewBox="0 0 32 32" aria-hidden="true"><path d="M28 4A24 24 0 0 1 4 28"/></svg>
</body>
</html>
```
FILE: styles.css
```css
* { box-sizing: border-box; }
body {
  margin: 0;
  min-height: 100vh;
  background: #f3f3f3;
  color: #03031a;
  font-family: Inter, "Liberation Sans", sans-serif;
}
h1, h2, h3, p, ul { margin: 0; padding: 0; }
ul { list-style: none; }

.top { background: #fff; height: 172px; overflow: hidden; color: #000; }
.status {
  display: flex;
  justify-content: space-between;
  align-items: center;
  height: 64px;
  padding: 0 28px 0 32px;
  font-size: 28px;
  font-weight: 500;
}
.status-side { display: flex; align-items: center; gap: 22px; }
.status-right { gap: 10px; }
.wifi { width: 28px; height: 20px; }
.wifi .arc { fill: none; stroke: #000; stroke-width: 4; }
.battery { width: 56px; height: 26px; }
.battery .shell { fill: none; stroke: #999; stroke-width: 2; }
.battery .cap { fill: #999; }
.navbar {
  display: grid;
  grid-template-columns: 88px 1fr 88px;
  align-items: center;
  height: 88px;
  padding: 0 20px;
}
.back {
  width: 88px;
  height: 88px;
  padding: 0;
  border: 0;
  border-radius: 50%;
  background: #fff;
  box-shadow: 0 8px 60px rgba(0, 0, 0, .12);
}
.back svg { display: block; width: 14px; height: 30px; margin: 0 auto; }
.back path { fill: none; stroke: #000; stroke-width: 4; stroke-linecap: round; stroke-linejoin: round; }
h1 { text-align: center; font-size: 33px; line-height: 40px; font-weight: 600; }

/* Map */
.map { display: block; width: 100%; height: auto; overflow: hidden; font-family: "Noto Sans", sans-serif; }
.tile * { vector-effect: non-scaling-stroke; }
.land { fill: #fcfdf6; }
.wood { fill: #e6f6d9; }
.wood2 { fill: #ddf4ca; }
.wood3 { fill: #d5f1bd; }
.shade { fill: #d5efc4; opacity: .5; }
.park { fill: #d3efc6; }
.town { fill: #f9f6f1; }
.peach { fill: #fdeee0; }
.water { fill: #b9dff7; }
.marsh { fill: #e0eff8; }
.stream, .border, .lane, .road, .road-edge, .main, .hwy, .hwy-edge, .rail, .rail-gap, .clear { fill: none; stroke-linejoin: round; }
.clear { stroke: #fcfdf6; stroke-width: 10; }
.clear.thin { stroke-width: 4; }
.stream { stroke: #8fcdf2; stroke-width: 2; }
.stream.wide { stroke: #b9dff7; stroke-width: 4; }
.stream.river { stroke: #b9dff7; stroke-width: 7; }
.border { stroke: #a79bea; stroke-width: 1; stroke-dasharray: 7 4; }
.lane { stroke: #fddc8e; stroke-width: 2; }
.road-edge { stroke: #f8cd7c; stroke-width: 7; }
.road { stroke: #fff0b3; stroke-width: 4; }
.main { stroke: #ffd98b; stroke-width: 7; }
.main.wide { stroke-width: 9; }
.hwy-edge { stroke: #fca657; stroke-width: 9; }
.hwy { stroke: #ffce80; stroke-width: 6; }
.rail { stroke: #a1a5a5; stroke-width: 3; }
.rail-gap { stroke: #fff; stroke-width: 1; stroke-dasharray: 6 5; }

.zone path { fill-opacity: .3; stroke-opacity: .35; stroke-width: 5; stroke-linejoin: round; }
.navy path { fill: #0a3f6c; stroke: #053e72; }
.azure path { fill: #0f74cd; stroke: #0a6bb8; }
.sky path { fill: #1996ff; stroke: #1590ff; }

.stops circle { fill: #fff; stroke: #3478e5; stroke-width: 5; }
.pin rect { fill: #3478e5; stroke: #fff; stroke-width: 1; }
.pin-line { fill: none; stroke: #fff; stroke-width: 2; }
.pin-fill { fill: #fff; }
.pin circle { fill: #3478e5; }
.tree-pin circle { fill: #8bc152; stroke: #fff; }
.tree-pin path { fill: #fff; }
.shields rect { fill: #4f88e6; }
.shields .euro { fill: #1f9262; }
.shields text { fill: #fff; font-size: 19px; font-weight: 600; text-anchor: middle; }

.labels text { paint-order: stroke; stroke: #fff; stroke-width: 4; stroke-linejoin: round; }
.place text { fill: #3b3b3b; font-size: 25px; text-anchor: middle; }
.labels .city { font-size: 35px; }
.labels .district text { fill: #9a9cc5; font-size: 24px; font-weight: 600; text-anchor: middle; stroke-opacity: .25; }
.forest text { fill: #5d9429; font-size: 24px; font-weight: 500; text-anchor: middle; }
.street text { fill: #333; font-size: 20px; }
.avenue text { font-size: 23px; }
.labels .hydro text { fill: #3569c0; font-size: 22px; font-style: italic; stroke-opacity: .6; }
.labels .brand { fill: #000; font-family: Roboto, sans-serif; font-size: 29px; font-weight: 700; text-anchor: end; }
.brand tspan { fill: #f00; }

/* Lists */
.block { padding-top: 48px; }
.block.first { padding-top: 56px; }
h2 { margin: 0 32px 23px; font-size: 31px; line-height: 40px; font-weight: 500; }
h3 { font-size: 28px; line-height: 34px; font-weight: 500; }
p, .method a { font-size: 24px; line-height: 30px; }
.zones { display: grid; gap: 24px; padding: 0 32px; }
.zone-card { padding-top: 16px; border-radius: 28px; background: linear-gradient(var(--tone) 0 60px, #fff 60px); }
.zone-card > div { display: grid; gap: 24px; padding: 16px 24px 15px; border-radius: 32px 32px 28px 28px; background: #fff; }
.z1 { --tone: #4285f0; }
.z2 { --tone: #8096f2; }
.z3 { --tone: #4f8ff0; }
.z4 { --tone: #7b3296; }
.methods { display: grid; gap: 16px; }
.method {
  display: flex;
  align-items: flex-start;
  gap: 32px;
  min-height: 112px;
  padding: 16px 32px 14px;
  border-radius: 16px;
  background: #fff;
}
.method > div { display: grid; }
.method h3 { font-size: 27px; }
.method a { margin-top: 28px; color: inherit; text-decoration: none; }
.badge { flex: none; width: 80px; height: 80px; border-radius: 22px; background: #f19114; }
.disc { fill: #2c635f; }
.weave { fill: none; stroke: #58847a; stroke-width: 5; stroke-dasharray: 1 2; opacity: .7; }
.weave.rim { stroke-width: 1; stroke-dasharray: none; }
.ink { fill: #fff; }
.cut { stroke: #2c635f; stroke-width: 1; }
.line { fill: none; stroke: #fff; stroke-width: 2; }
.teal { fill: none; stroke: #2c635f; stroke-width: 2; }
.dots { stroke-width: 1; stroke-dasharray: 3 1; }
.corner { position: fixed; right: 8px; bottom: 8px; width: 32px; height: 32px; }
.corner path { fill: none; stroke: #858585; stroke-width: 7; stroke-linecap: round; }
```
